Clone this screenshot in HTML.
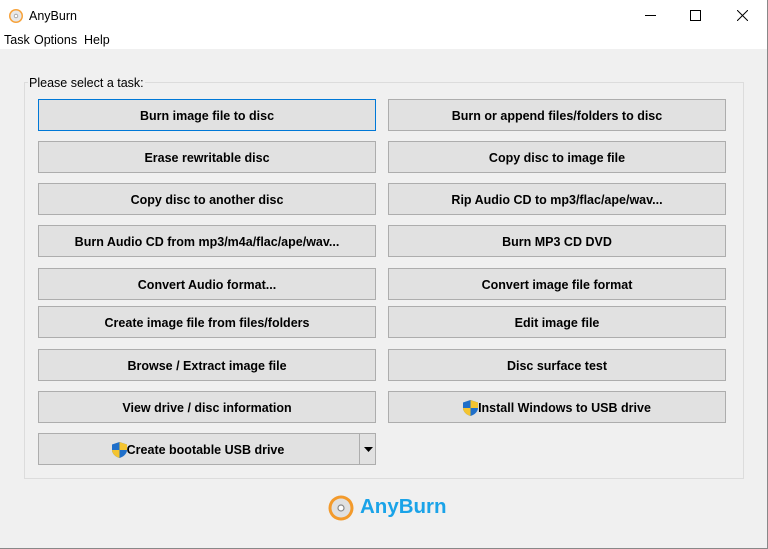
<!DOCTYPE html>
<html><head><style>
*{margin:0;padding:0;box-sizing:border-box}
body{width:768px;height:549px;background:#f0f0f0;font-family:"Liberation Sans",sans-serif;position:relative;overflow:hidden}
.edge{position:absolute;right:0;top:0;width:1px;height:549px;background:#888}
.bot{position:absolute;left:0;bottom:0;width:768px;height:1px;background:#888}
.title{position:absolute;left:0;top:0;width:767px;height:32px;background:#fff}
.title span{position:absolute;left:29px;top:9px;font-size:12.5px;color:#000}
.menu{position:absolute;left:0;top:32px;width:767px;height:17px;background:#fff;font-size:12.5px}
.menu span{position:absolute;top:1px}
.grp{position:absolute;left:24px;top:82px;width:720px;height:397px;border:1px solid #dcdcdc}
.lbl{position:absolute;left:28px;top:76px;font-size:12.5px;background:#f0f0f0;padding:0 1px}
.b{position:absolute;width:338px;height:32px;background:#e1e1e1;border:1px solid #adadad;font-size:12.5px;font-weight:bold;display:flex;align-items:center;justify-content:center;color:#000;padding-top:1px}
.l{left:38px}.r{left:388px}
.sel{border:1px solid #0078d7;background:#e1e1e1}
</style></head><body>
<div class="title">
<svg style="position:absolute;left:8px;top:8px" width="16" height="16" viewBox="0 0 16 16"><circle cx="8" cy="8" r="7" fill="#f7a23a"/><circle cx="8" cy="8" r="5.5" fill="#e8e8e8"/><circle cx="8" cy="8" r="1.8" fill="#fff" stroke="#999" stroke-width=".8"/></svg>
<span>AnyBurn</span>
<svg style="position:absolute;left:645px;top:15px" width="11" height="1"><rect width="11" height="1" fill="#000"/></svg>
<svg style="position:absolute;left:690px;top:10px" width="11" height="11"><rect x=".5" y=".5" width="10" height="10" fill="none" stroke="#000"/></svg>
<svg style="position:absolute;left:737px;top:10px" width="11" height="11"><path d="M0 0L11 11M11 0L0 11" stroke="#000"/></svg>
</div>
<div class="menu"><span style="left:4px">Task</span><span style="left:34px">Options</span><span style="left:84px">Help</span></div>
<div class="grp"></div>
<div class="lbl">Please select a task:</div>
<div class="b l sel" style="top:99px">Burn image file to disc</div>
<div class="b r" style="top:99px">Burn or append files/folders to disc</div>
<div class="b l" style="top:141px">Erase rewritable disc</div>
<div class="b r" style="top:141px">Copy disc to image file</div>
<div class="b l" style="top:183px">Copy disc to another disc</div>
<div class="b r" style="top:183px">Rip Audio CD to mp3/flac/ape/wav...</div>
<div class="b l" style="top:225px">Burn Audio CD from mp3/m4a/flac/ape/wav...</div>
<div class="b r" style="top:225px">Burn MP3 CD DVD</div>
<div class="b l" style="top:268px">Convert Audio format...</div>
<div class="b r" style="top:268px">Convert image file format</div>
<div class="b l" style="top:306px">Create image file from files/folders</div>
<div class="b r" style="top:306px">Edit image file</div>
<div class="b l" style="top:349px">Browse / Extract image file</div>
<div class="b r" style="top:349px">Disc surface test</div>
<div class="b l" style="top:391px">View drive / disc information</div>
<div class="b r" style="top:391px"><svg width="15" height="16" viewBox="0 0 15 16"><path d="M7.5 0L15 2.5V8C15 12 11 15 7.5 16 4 15 0 12 0 8V2.5Z" fill="#1f6fc9"/><path d="M7.5 0L15 2.5V8H7.5Z" fill="#f4c430"/><path d="M0 8H7.5V16C4 15 0 12 0 8Z" fill="#f4c430"/></svg>Install Windows to USB drive</div>
<div class="b l" style="top:433px"><span style="margin-right:18px;display:flex;align-items:center"><svg width="15" height="16" viewBox="0 0 15 16"><path d="M7.5 0L15 2.5V8C15 12 11 15 7.5 16 4 15 0 12 0 8V2.5Z" fill="#1f6fc9"/><path d="M7.5 0L15 2.5V8H7.5Z" fill="#f4c430"/><path d="M0 8H7.5V16C4 15 0 12 0 8Z" fill="#f4c430"/></svg>Create bootable USB drive</span></div>
<div style="position:absolute;left:359px;top:434px;width:1px;height:30px;background:#adadad"></div>
<svg style="position:absolute;left:364px;top:447px" width="9" height="5"><path d="M0 0H9L4.5 5Z" fill="#000"/></svg>
<svg style="position:absolute;left:328px;top:495px" width="26" height="26" viewBox="0 0 26 26"><circle cx="13" cy="13" r="12.5" fill="#f39a2b"/><circle cx="13" cy="13" r="9.5" fill="#e0e0e0"/><circle cx="13" cy="13" r="3" fill="#fff" stroke="#888" stroke-width="1.2"/></svg>
<div style="position:absolute;left:360px;top:495px;font-size:20.5px;font-weight:bold;color:#1aa3e8">AnyBurn</div>
<div class="edge"></div><div class="bot"></div>
</body></html>
